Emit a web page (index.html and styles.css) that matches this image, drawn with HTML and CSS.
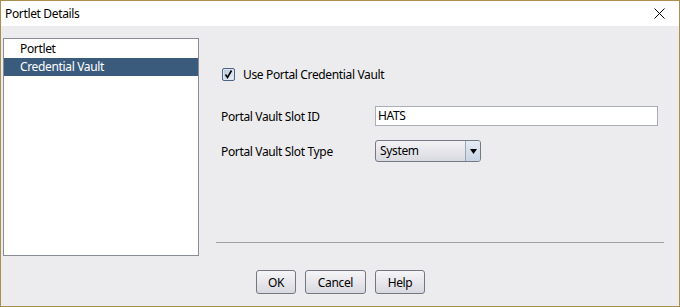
FILE: index.html
```html
<!DOCTYPE html>
<html lang="en">
<head>
    <meta charset="UTF-8">
    <meta name="viewport" content="width=device-width, initial-scale=1.0">
    <title>Portlet Details</title>
    <link rel="stylesheet" href="styles.css">
</head>
<body>

    <div class="window">
        <div class="titlebar">
            <span class="title">Portlet Details</span>
            <svg class="close" width="11" height="11" viewBox="0 0 11 11">
                <path d="M0.5 0.5 L10.5 10.5 M10.5 0.5 L0.5 10.5" stroke="#000" stroke-width="1" fill="none"/>
            </svg>
        </div>

        <div class="content">
            <ul class="nav">
                <li>Portlet</li>
                <li class="selected">Credential Vault</li>
            </ul>

            <div class="pane">
                <label class="check">
                    <svg width="13" height="13" viewBox="0 0 13 13">
                        <defs>
                            <linearGradient id="boxfill" x1="0" y1="0" x2="1" y2="1">
                                <stop offset="0" stop-color="#b9c9de"/>
                                <stop offset="1" stop-color="#e8eef6"/>
                            </linearGradient>
                        </defs>
                        <rect x="0.5" y="0.5" width="12" height="12" rx="1.5" fill="#dfe6f0" stroke="#4d6185"/>
                        <rect x="2" y="2" width="9" height="9" fill="url(#boxfill)"/>
                        <path d="M3.5 6.5 L5.5 9.5 L9.5 2.5" stroke="#000" stroke-width="1.6" fill="none"/>
                    </svg>
                    <span>Use Portal Credential Vault</span>
                </label>

                <div class="fields">
                    <span class="label">Portal Vault Slot ID</span>
                    <div class="textbox">HATS</div>

                    <span class="label">Portal Vault Slot Type</span>
                    <div class="dropdown">
                        <span class="value">System</span>
                        <span class="arrow">
                            <svg width="7" height="5" viewBox="0 0 7 5"><path d="M0 0 H7 L3.5 5 Z" fill="#000"/></svg>
                        </span>
                    </div>
                </div>

                <div class="separator"></div>
            </div>
        </div>

        <div class="buttons">
            <button class="ok">OK</button>
            <button class="cancel">Cancel</button>
            <button class="help">Help</button>
        </div>
    </div>

</body>
</html>
```

FILE: styles.css
```css
body {
    margin: 0;
    padding: 0;
    font-family: "Noto Sans", "Open Sans", sans-serif;
    font-size: 12px;
    letter-spacing: -0.35px;
    color: #000;
}

.window {
    width: 680px;
    height: 307px;
    box-sizing: border-box;
    border: 1px solid #a88f4f;
    background-color: #ececef;
}

.titlebar {
    height: 25px;
    background-color: #fff;
    display: flex;
    align-items: center;
    justify-content: space-between;
    padding: 0 14px 0 4px;
}

.title {
    margin-top: -1px;
}

.close {
    display: block;
}

.content {
    display: flex;
    padding: 12px 0 0 2px;
}

.nav {
    list-style: none;
    margin: 0;
    padding: 1px 0 0 0;
    width: 196px;
    height: 218px;
    box-sizing: border-box;
    border: 1px solid #8a8d96;
    background-color: #fff;
}

.nav li {
    height: 18px;
    line-height: 18px;
    padding-left: 16px;
}

.nav li.selected {
    background-color: #3b5b7d;
    color: #fff;
}

.pane {
    width: 448px;
    height: 205px;
    margin-left: 17px;
    display: flex;
    flex-direction: column;
}

.check {
    display: flex;
    align-items: center;
    gap: 8px;
    margin: 30px 0 0 6px;
    height: 13px;
}

.check svg {
    display: block;
}

.fields {
    display: grid;
    grid-template-columns: 154px 283px;
    grid-template-rows: 20px 22px;
    row-gap: 14px;
    align-items: center;
    margin: 25px 0 0 5px;
}

.textbox {
    height: 20px;
    box-sizing: border-box;
    border: 1px solid #a9adb5;
    background-color: #fff;
    padding-left: 2px;
    line-height: 18px;
}

.dropdown {
    width: 106px;
    height: 22px;
    box-sizing: border-box;
    border: 1px solid #767983;
    border-radius: 3px;
    display: flex;
    background: linear-gradient(#f3f3f5, #e6e6eb 50%, #d9dae0);
}

.dropdown .value {
    flex: 1;
    padding-left: 4px;
    line-height: 20px;
}

.dropdown .arrow {
    width: 14px;
    border-left: 1px solid #9ea6b4;
    display: flex;
    align-items: center;
    justify-content: center;
    background: linear-gradient(#e4ecf5, #c8d4e3);
    border-radius: 0 2px 2px 0;
}

.separator {
    margin-top: auto;
    height: 1px;
    background-color: #a0a0a4;
}

.buttons {
    display: flex;
    gap: 9px;
    padding: 14px 0 0 255px;
}

button {
    height: 24px;
    box-sizing: border-box;
    border: 1px solid #747780;
    border-radius: 3px;
    background: linear-gradient(#f5f5f7, #e7e7ec 50%, #d8d9e0);
    font-family: inherit;
    font-size: 12px;
    letter-spacing: inherit;
    color: #000;
    padding: 0;
}

.ok {
    width: 40px;
}

.cancel {
    width: 61px;
}

.help {
    width: 50px;
}
```
